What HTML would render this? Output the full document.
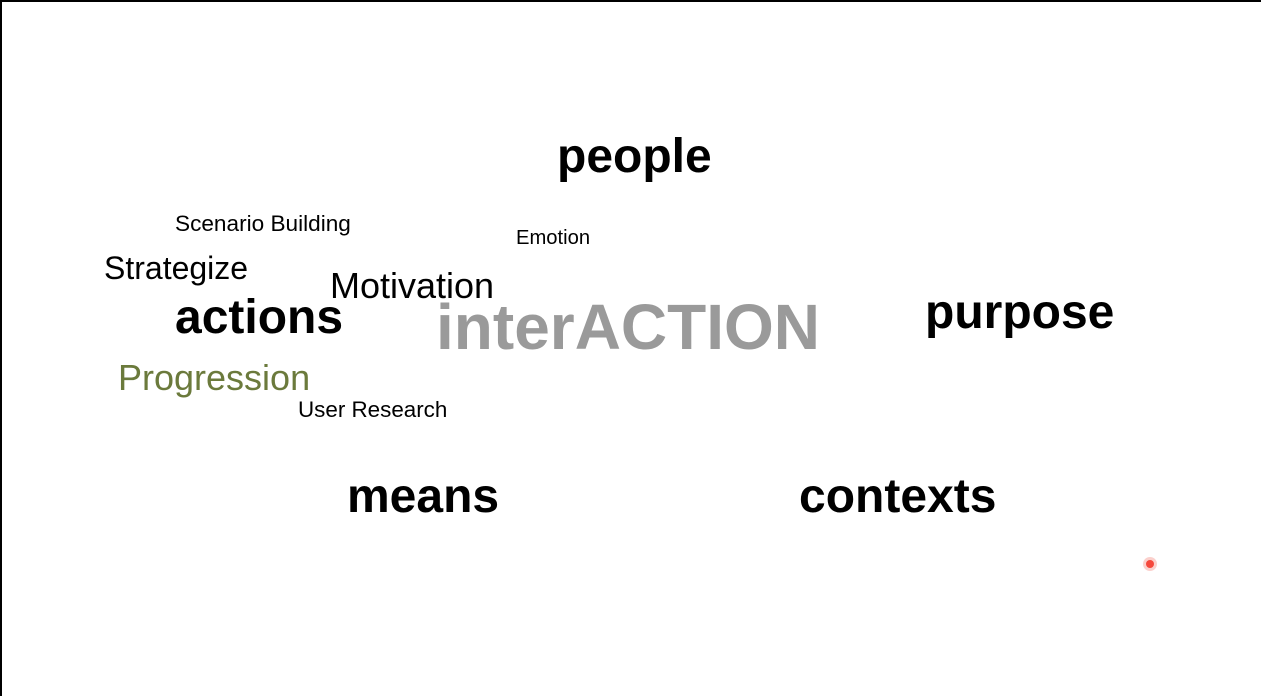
<!DOCTYPE html>
<html><head><meta charset="utf-8"><style>
html,body{margin:0;padding:0;background:#fff;}
body{width:1261px;height:696px;position:relative;overflow:hidden;font-family:"Liberation Sans",Arial,sans-serif;}
.f{position:absolute;inset:0;border-top:2px solid #000;border-left:2px solid #000;}
.w{position:absolute;line-height:1;white-space:nowrap;color:#000;}
.b{font-weight:bold;}
.dot{position:absolute;left:1143px;top:557px;width:14px;height:14px;border-radius:50%;background:#fbd0cc;}
.dot:after{content:"";position:absolute;left:3px;top:3px;width:8px;height:8px;border-radius:50%;background:#f5483c;}
</style></head><body>
<div class="f"></div>
<div class="w b" style="left:557px;top:133px;font-size:48px">people</div>
<div class="w b" style="left:925px;top:289px;font-size:48px">purpose</div>
<div class="w b" style="left:175px;top:294px;font-size:48px">actions</div>
<div class="w b" style="left:347px;top:473px;font-size:48px">means</div>
<div class="w b" style="left:799px;top:473px;font-size:48px">contexts</div>
<div class="w b" style="left:436px;top:295px;font-size:64px;color:#9a9a9a">interACTION</div>
<div class="w" style="left:330px;top:268px;font-size:36px">Motivation</div>
<div class="w" style="left:104px;top:252px;font-size:32px">Strategize</div>
<div class="w" style="left:118px;top:360px;font-size:36px;color:#6b7a3c">Progression</div>
<div class="w" style="left:175px;top:213px;font-size:22.6px">Scenario Building</div>
<div class="w" style="left:516px;top:228px;font-size:20.2px">Emotion</div>
<div class="w" style="left:298px;top:399px;font-size:22.4px">User Research</div>
<div class="dot"></div>
</body></html>
